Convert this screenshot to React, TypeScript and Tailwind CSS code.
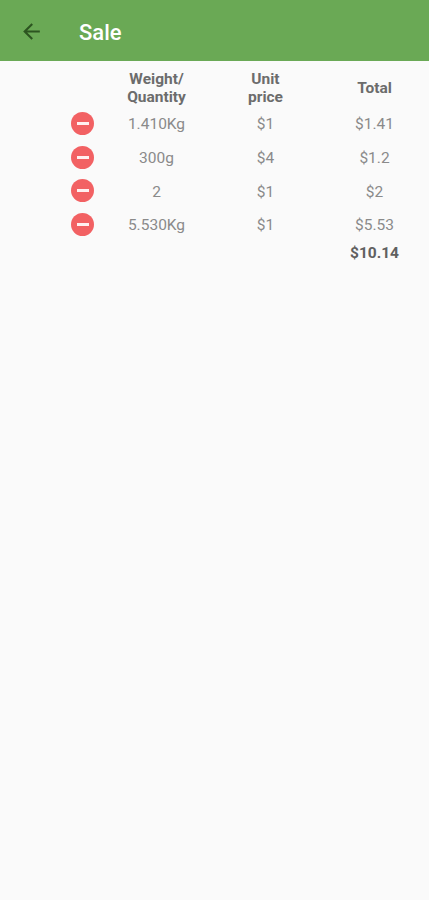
import { MdArrowBack } from "react-icons/md"

type SaleItem = {
  id: number
  quantity: string
  unitPrice: string
  total: string
}

const items: SaleItem[] = [
  { id: 1, quantity: "1.410Kg", unitPrice: "$1", total: "$1.41" },
  { id: 2, quantity: "300g", unitPrice: "$4", total: "$1.2" },
  { id: 3, quantity: "2", unitPrice: "$1", total: "$2" },
  { id: 4, quantity: "5.530Kg", unitPrice: "$1", total: "$5.53" },
]

export default function App() {
  return (
    <div className="min-h-screen bg-[#fafafa] font-['Roboto',sans-serif] text-[15.5px] text-[#8a8a8a]">
      {/* App bar */}
      <header className="flex h-[61px] items-center bg-[#6aa955] pt-[2px] pl-[19px]">
        <button aria-label="Back" className="text-[#2c5420]">
          <MdArrowBack className="size-[25px]" />
        </button>
        <h1 className="ml-[35px] pt-[2px] text-[22px] font-medium text-white">Sale</h1>
      </header>

      {/* Column headings */}
      <div className="grid h-[46px] grid-cols-[102px_109px_109px_109px] items-center pt-[7px] text-center leading-[18px] font-bold text-[#6c6c6c]">
        <span />
        <span>Weight/<br />Quantity</span>
        <span>Unit<br />price</span>
        <span>Total</span>
      </div>

      {items.map((item) => (
        <div key={item.id} className="grid h-[33.7px] grid-cols-[102px_109px_109px_109px] items-center text-center leading-5">
          <button aria-label="Remove" className="mb-[0.5px] ml-[71px] flex size-[23px] items-center justify-center rounded-full bg-[#f26163]">
            <span className="h-[3px] w-3 bg-[#fff0f0]" />
          </button>
          <span className="pt-[1px]">{item.quantity}</span>
          <span className="pt-[1px]">{item.unitPrice}</span>
          <span className="pt-[1px]">{item.total}</span>
        </div>
      ))}

      <div className="ml-[320px] text-center leading-[22px] font-bold text-[#606060]">$10.14</div>
    </div>
  )
}
